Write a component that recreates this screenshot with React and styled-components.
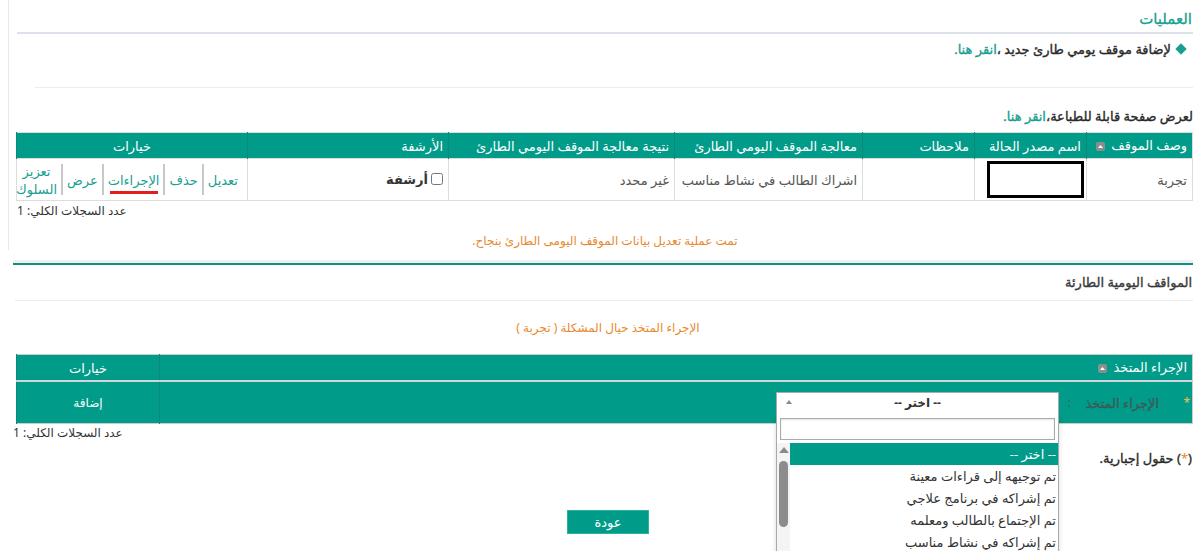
import styled, { createGlobalStyle } from 'styled-components';

const TEAL = '#009b89';
const LINK = '#17a090';
const ORANGE = '#e8892f';

const GlobalStyle = createGlobalStyle`
  html, body {
    margin: 0;
    padding: 0;
    background: #fff;
    overflow: hidden;
  }

  body {
    font-family: "Noto Sans", "DejaVu Sans", sans-serif;
    font-size: 13px;
    color: #444;
  }
`;

const actionOptions = [
  'تم توجيهه إلى قراءات معينة',
  'تم إشراكه في برنامج علاجي',
  'تم الإجتماع بالطالب ومعلمه',
  'تم إشراكه في نشاط مناسب',
];

const SortIcon = () => (
  <IconBox>
    <svg width="9" height="9" viewBox="0 0 9 9">
      <rect width="9" height="9" rx="2" fill="#8a8f8e" />
      <path d="M2 6 L4.5 3 L7 6 Z" fill="#fff" />
    </svg>
  </IconBox>
);

const App = () => {
  return (
    <>
      <GlobalStyle />
      <Viewport>
        <Page dir="rtl">
          <TopPanel>
            <Title>العمليات</Title>
            <AddLine>
              <Diamond />
              <span>
                لإضافة موقف يومي طارئ جديد ،<TextLink>انقر هنا.</TextLink>
              </span>
            </AddLine>
            <Divider $indent={18} />
            <PrintLine>
              لعرض صفحة قابلة للطباعة،<TextLink>انقر هنا.</TextLink>
            </PrintLine>

            <Grid>
              <colgroup>
                <col style={{ width: 106 }} />
                <col style={{ width: 112 }} />
                <col style={{ width: 112 }} />
                <col style={{ width: 188 }} />
                <col style={{ width: 226 }} />
                <col style={{ width: 201 }} />
                <col style={{ width: 231 }} />
              </colgroup>
              <thead>
                <tr>
                  <HeadCell>
                    وصف الموقف <SortIcon />
                  </HeadCell>
                  <HeadCell>اسم مصدر الحالة</HeadCell>
                  <HeadCell>ملاحظات</HeadCell>
                  <HeadCell>معالجة الموقف اليومي الطارئ</HeadCell>
                  <HeadCell>نتيجة معالجة الموقف اليومي الطارئ</HeadCell>
                  <HeadCell>الأرشفة</HeadCell>
                  <HeadCell $center>خيارات</HeadCell>
                </tr>
              </thead>
              <tbody>
                <tr>
                  <BodyCell>تجربة</BodyCell>
                  <BodyCell $tight>
                    <Redacted />
                  </BodyCell>
                  <BodyCell />
                  <BodyCell>اشراك الطالب في نشاط مناسب</BodyCell>
                  <BodyCell>غير محدد</BodyCell>
                  <BodyCell>
                    <ArchiveLabel>
                      <Check type="checkbox" readOnly />
                      أرشفة
                    </ArchiveLabel>
                  </BodyCell>
                  <BodyCell $center>
                    <ActionLinks>
                      <ActionLink>تعديل</ActionLink>
                      <ActionLink>حذف</ActionLink>
                      <ActionLink $marked>الإجراءات</ActionLink>
                      <ActionLink>عرض</ActionLink>
                      <ActionLink>
                        تعزيز
                        <br />
                        السلوك
                      </ActionLink>
                    </ActionLinks>
                  </BodyCell>
                </tr>
              </tbody>
            </Grid>
            <RecordCount>عدد السجلات الكلي: 1</RecordCount>
            <Notice>تمت عملية تعديل بيانات الموقف اليومى الطارئ بنجاح.</Notice>
          </TopPanel>

          <Section>
            <SectionTitle>المواقف اليومية الطارئة</SectionTitle>
            <Divider $indent={2} $gap={9} />
            <Caption>الإجراء المتخذ حيال المشكلة ( تجربة )</Caption>

            <FormGrid>
              <colgroup>
                <col style={{ width: 1033 }} />
                <col style={{ width: 143 }} />
              </colgroup>
              <thead>
                <tr>
                  <FormHead>
                    الإجراء المتخذ <SortIcon />
                  </FormHead>
                  <FormHead $center>خيارات</FormHead>
                </tr>
              </thead>
              <tbody>
                <tr>
                  <FormCell>
                    <FieldRow>
                      <Required>*</Required>
                      <FieldLabel>الإجراء المتخذ</FieldLabel>
                      <Colon>:</Colon>
                      <SelectWrap>
                        <SelectBox>
                          <span>-- اختر --</span>
                          <Caret />
                        </SelectBox>
                        <Dropdown>
                          <SearchInput />
                          <OptionArea>
                            <OptionList>
                              <Option $active>-- اختر --</Option>
                              {actionOptions.map((opt) => (
                                <Option key={opt}>{opt}</Option>
                              ))}
                            </OptionList>
                            <ScrollTrack>
                              <ScrollArrow />
                              <ScrollThumb />
                            </ScrollTrack>
                          </OptionArea>
                        </Dropdown>
                      </SelectWrap>
                    </FieldRow>
                  </FormCell>
                  <FormCell $center>إضافة</FormCell>
                </tr>
              </tbody>
            </FormGrid>
            <RecordCount $top={1}>عدد السجلات الكلي: 1</RecordCount>
            <RequiredNote>
              <span>(</span>
              <Star>*</Star>
              <span>) حقول إجبارية.</span>
            </RequiredNote>
            <ButtonRow>
              <BackButton>عودة</BackButton>
            </ButtonRow>
          </Section>
        </Page>
      </Viewport>
    </>
  );
};

export default App;

const Viewport = styled.div`
  width: 1193px;
  height: 551px;
  overflow: hidden;
`;

const Page = styled.div`
  direction: rtl;
`;

const TopPanel = styled.div`
  margin-left: 8px;
  padding-left: 8px;
  padding-bottom: 1px;

  border-left: 1px solid #e8e8e8;
`;

const Title = styled.div`
  padding: 8px 1px 4px 0;
  line-height: 20px;

  font-size: 15px;
  color: ${LINK};
  -webkit-text-stroke: 0.3px ${LINK};

  border-bottom: 2px solid #dde1ea;
`;

const AddLine = styled.div`
  display: flex;
  align-items: center;
  gap: 4px;
  margin-top: 6px;
  padding-right: 8px;
  line-height: 18px;

  color: #2a2a2a;
  -webkit-text-stroke: 0.35px currentColor;
`;

const Diamond = styled.span`
  width: 8px;
  height: 8px;
  margin-left: 2px;

  background: ${LINK};
  transform: rotate(45deg);
`;

const TextLink = styled.a`
  color: ${LINK};
  text-decoration: none;
  cursor: pointer;
`;

const Divider = styled.div`
  margin-top: ${({ $gap }) => $gap ?? 29}px;
  margin-left: ${({ $indent }) => $indent}px;

  border-top: 1px solid #ececec;
`;

const PrintLine = styled.div`
  margin-top: 19px;
  line-height: 18px;

  color: #2a2a2a;
  -webkit-text-stroke: 0.35px currentColor;
`;

const Grid = styled.table`
  width: 100%;
  margin-top: 7px;

  table-layout: fixed;
  border-collapse: collapse;
  border: 1px solid #ddd;
`;

const HeadCell = styled.th`
  height: 25px;
  padding: 0 5px;

  font-weight: 400;
  font-size: 13px;
  color: #fff;
  text-align: ${({ $center }) => ($center ? 'center' : 'right')};
  white-space: nowrap;

  background: ${TEAL};
  border-left: 1px solid #0b8878;
`;

const IconBox = styled.span`
  display: inline-block;
  margin-right: 3px;
  vertical-align: -1px;
`;

const BodyCell = styled.td`
  height: 41px;
  padding: ${({ $tight }) => ($tight ? '0 2px 0 0' : '0 5px')};

  font-size: 13px;
  color: #555;
  text-align: ${({ $center }) => ($center ? 'center' : 'right')};

  border: 1px solid #ddd;
`;

const Redacted = styled.div`
  width: 91px;
  height: 31px;

  border: 3px solid #000;
`;

const ArchiveLabel = styled.label`
  display: inline-flex;
  align-items: center;
  gap: 3px;

  font-weight: 700;
  color: #333;
`;

const Check = styled.input`
  width: 12px;
  height: 12px;
  margin: 0;
`;

const ActionLinks = styled.div`
  display: inline-flex;
  align-items: center;
`;

const ActionLink = styled.a`
  display: flex;
  align-items: center;
  justify-content: center;
  position: relative;
  height: 31px;
  padding: 0 4px;
  line-height: 18px;

  font-size: 13px;
  color: ${LINK};
  text-align: center;
  cursor: pointer;

  & + & {
    border-right: 2px solid #c8c8c8;
  }

  &::after {
    content: '';
    display: ${({ $marked }) => ($marked ? 'block' : 'none')};
    position: absolute;
    left: 6px;
    right: 5px;
    bottom: 1px;
    height: 3px;

    background: #e31d1d;
  }
`;

const RecordCount = styled.div`
  margin-top: ${({ $top }) => $top ?? 2}px;
  line-height: 16px;

  font-size: 12px;
  color: #333;
  text-align: left;
`;

const Notice = styled.div`
  margin-top: 14px;
  line-height: 16px;

  font-size: 12px;
  color: ${ORANGE};
  text-align: center;
`;

const Section = styled.div`
  margin-top: 10px;
  margin-left: 13px;

  border-top: 3px solid #eef1f1;

  &::before {
    content: '';
    display: block;
    height: 2px;
    background: #138f7e;
  }
`;

const SectionTitle = styled.div`
  margin-top: 8px;
  padding-right: 1px;
  line-height: 18px;

  color: #3a3a3a;
  -webkit-text-stroke: 0.35px currentColor;
`;

const Caption = styled.div`
  margin-top: 18px;
  padding-left: 10px;
  line-height: 18px;

  font-size: 12px;
  color: ${ORANGE};
  text-align: center;
`;

const FormGrid = styled.table`
  width: calc(100% - 4px);
  margin-top: 17px;
  margin-left: 4px;

  table-layout: fixed;
  border-collapse: collapse;
  border: 1px solid #ccc;
`;

const FormHead = styled.th`
  height: 25px;
  padding: 0 5px;

  font-weight: 400;
  font-size: 13px;
  color: #fff;
  text-align: ${({ $center }) => ($center ? 'center' : 'right')};
  white-space: nowrap;

  background: ${TEAL};
  border-left: 1px solid #0b8878;
  border-bottom: 2px solid #cfd6d5;
`;

const FormCell = styled.td`
  height: 41px;
  padding: 0;

  font-size: 12px;
  color: #fff;
  text-align: ${({ $center }) => ($center ? 'center' : 'right')};

  background: ${TEAL};
  border-left: 1px solid #0b8878;
`;

const FieldRow = styled.div`
  display: flex;
  align-items: center;
  padding-right: 2px;
`;

const Required = styled.span`
  width: 8px;

  font-size: 12px;
  color: #f2c14e;
`;

const FieldLabel = styled.span`
  width: 80px;
  margin-right: 23px;

  font-size: 13px;
  color: #3f5955;
  white-space: nowrap;
  -webkit-text-stroke: 0.3px currentColor;
`;

const Colon = styled.span`
  width: 20px;

  text-align: center;
  color: #3f5955;
`;

const SelectWrap = styled.div`
  position: relative;
  width: 283px;
`;

const SelectBox = styled.div`
  display: flex;
  align-items: center;
  justify-content: center;
  position: relative;
  height: 20px;

  font-size: 12px;
  font-weight: 700;
  color: #333;

  background: #fff;
  border: 1px solid #aaa;
`;

const Caret = styled.span`
  position: absolute;
  left: 9px;
  top: 7px;
  width: 0;
  height: 0;

  border-left: 3px solid transparent;
  border-right: 3px solid transparent;
  border-bottom: 4px solid #888;
`;

const Dropdown = styled.div`
  position: absolute;
  top: 21px;
  left: 0;
  right: 0;
  z-index: 10;
  padding-top: 5px;

  background: #fff;
  border: 1px solid #aaa;
  border-top: none;
  box-shadow: 0 4px 5px rgba(0, 0, 0, 0.15);
`;

const SearchInput = styled.div`
  height: 20px;
  margin: 0 3px;

  border: 1px solid #aaa;
  box-shadow: inset 0 1px 2px rgba(0, 0, 0, 0.12);
`;

const OptionArea = styled.div`
  display: flex;
  margin-top: 3px;
`;

const OptionList = styled.div`
  flex: 1 1 0;
`;

const Option = styled.div`
  height: 22px;
  padding-right: 2px;
  line-height: 22px;

  font-size: 13px;
  color: ${({ $active }) => ($active ? '#fff' : '#333')};
  text-align: right;

  background: ${({ $active }) => ($active ? TEAL : 'transparent')};
`;

const ScrollTrack = styled.div`
  display: flex;
  flex-direction: column;
  align-items: center;
  width: 13px;
  height: 130px;

  background: #f4f4f4;
`;

const ScrollArrow = styled.span`
  width: 0;
  height: 0;
  margin-top: 4px;

  border-left: 5px solid transparent;
  border-right: 5px solid transparent;
  border-bottom: 6px solid #8c8c8c;
`;

const ScrollThumb = styled.span`
  width: 9px;
  height: 66px;
  margin-top: 8px;

  background: #8c8c8c;
  border-radius: 5px;
`;

const RequiredNote = styled.div`
  margin-top: 8px;
  padding-right: 1px;
  line-height: 18px;

  color: #2a2a2a;
  -webkit-text-stroke: 0.35px currentColor;
`;

const Star = styled.span`
  color: ${ORANGE};
  -webkit-text-stroke: 0;
`;

const ButtonRow = styled.div`
  display: flex;
  justify-content: center;
  margin-top: 43px;
  padding-left: 10px;
`;

const BackButton = styled.button`
  width: 82px;
  height: 24px;
  padding: 0;

  font-family: inherit;
  font-size: 13px;
  color: #fff;

  background: ${TEAL};
  border: 1px solid #2bb3a2;
  cursor: pointer;
`;
